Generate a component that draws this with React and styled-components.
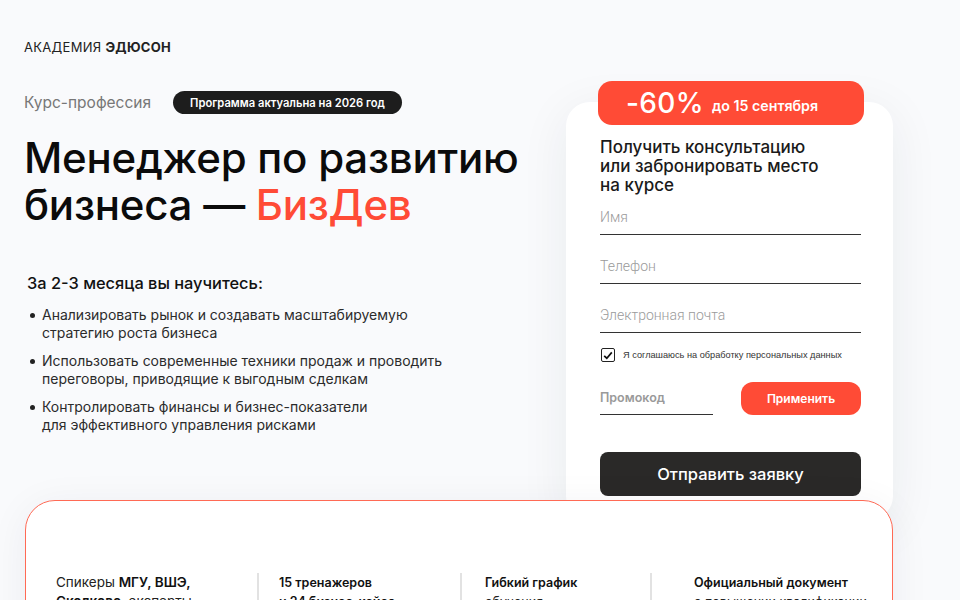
import React from 'react';
import styled, { createGlobalStyle } from 'styled-components';

const GlobalStyle = createGlobalStyle`
  html, body {
    margin: 0;
    padding: 0;
    background: #f9fafc;
  }
  body {
    font-family: 'Inter', 'Noto Sans', sans-serif;
    color: #111;
    overflow: hidden;
  }
  * {
    box-sizing: border-box;
  }
`;

const Page = styled.div`
  width: 960px;
  height: 600px;
  padding: 40px 67px 0 24px;
  overflow: hidden;
`;

const Logo = styled.div`
  font-size: 13px;
  line-height: 14px;
  letter-spacing: 0.3px;
  color: #222;

  b {
    font-weight: 700;
  }
`;

const Hero = styled.div`
  display: flex;
  align-items: flex-start;
  justify-content: space-between;
  margin-top: 27px;
`;

const Left = styled.div`
  padding-top: 10px;
`;

const TagRow = styled.div`
  display: flex;
  align-items: center;
  gap: 22px;
`;

const Kind = styled.span`
  font-size: 15.5px;
  color: #777;
`;

const Badge = styled.span`
  display: inline-flex;
  align-items: center;
  height: 23px;
  padding: 0 17px;
  border-radius: 12px;
  background: #1d1d1d;
  color: #fff;
  font-size: 11.2px;
  font-weight: 600;
`;

const Title = styled.h1`
  margin: 20px 0 0;
  font-size: 42px;
  line-height: 47px;
  font-weight: 500;
  letter-spacing: -0.25px;
  color: #0b0b0b;

  span {
    color: #ff4b36;
  }
`;

const Subtitle = styled.h3`
  margin: 44px 0 0 3px;
  font-size: 16.4px;
  line-height: 22px;
  font-weight: 500;
  color: #111;
`;

const List = styled.ul`
  margin: 12px 0 0;
  padding: 0 0 0 18px;
  list-style: none;
  display: flex;
  flex-direction: column;
  gap: 10px;
`;

const Item = styled.li`
  position: relative;
  font-size: 14px;
  line-height: 18px;
  color: #2b2b2b;

  &::before {
    content: '';
    position: absolute;
    left: -12px;
    top: 7px;
    width: 5px;
    height: 5px;
    border-radius: 50%;
    background: #222;
  }
`;

const FormColumn = styled.div`
  width: 327px;
  display: flex;
  flex-direction: column;
  align-items: center;
`;

const Discount = styled.div`
  position: relative;
  z-index: 1;
  width: 266px;
  height: 44px;
  margin-bottom: -23px;
  margin-left: 3px;
  border-radius: 14px;
  background: #ff4b36;
  color: #fff;
  display: flex;
  align-items: center;
  justify-content: center;
  gap: 8px;
  padding-right: 18px;
`;

const Percent = styled.span`
  font-size: 28px;
  font-weight: 500;
  letter-spacing: 0.4px;
`;

const Until = styled.span`
  font-size: 14.2px;
  font-weight: 600;
  padding-top: 5px;
`;

const Card = styled.div`
  width: 100%;
  background: #fff;
  border-radius: 24px;
  padding: 36px 32px 24px 34px;
  box-shadow: 0 10px 50px rgba(30, 40, 60, 0.07);
`;

const CardTitle = styled.div`
  font-size: 17px;
  line-height: 19px;
  font-weight: 500;
  color: #1a1a1a;
`;

const Fields = styled.div`
  margin-top: 7px;
  display: flex;
  flex-direction: column;
  gap: 16px;
`;

const Field = styled.input`
  display: block;
  width: ${(p) => p.$width || '100%'};
  height: 33px;
  padding: 0 0 2px;
  border: none;
  border-bottom: 1px solid #333;
  background: transparent;
  font-family: 'Roboto', 'Inter', sans-serif;
  font-size: 14px;
  outline: none;

  &::placeholder {
    color: #9a9a9a;
    font-weight: ${(p) => (p.$strong ? 600 : 300)};
    font-family: ${(p) => (p.$strong ? "'Inter', sans-serif" : "'Roboto', sans-serif")};
    font-size: ${(p) => (p.$strong ? '12.5px' : '14px')};
  }
`;

const Agree = styled.label`
  display: flex;
  align-items: center;
  gap: 8px;
  margin-top: 15px;
  margin-left: 1px;
  font-family: 'Liberation Sans', Arial, sans-serif;
  font-size: 9.2px;
  color: #333;
`;

const Box = styled.span`
  width: 14px;
  height: 14px;
  border: 1.5px solid #222;
  border-radius: 2px;
  display: flex;
  align-items: center;
  justify-content: center;
`;

const PromoRow = styled.div`
  margin-top: 20px;
  display: flex;
  align-items: flex-end;
  justify-content: space-between;
`;

const ApplyButton = styled.button`
  width: 120px;
  height: 33px;
  border: none;
  border-radius: 12px;
  background: #ff4b36;
  color: #fff;
  font-family: 'Inter', sans-serif;
  font-size: 12px;
  font-weight: 600;
  align-self: flex-start;
`;

const Submit = styled.button`
  display: block;
  width: 100%;
  height: 44px;
  margin-top: 37px;
  border: none;
  border-radius: 8px;
  background: #2a2928;
  color: #fff;
  font-family: 'Inter', sans-serif;
  font-size: 16.5px;
  font-weight: 500;
`;

const Features = styled.div`
  position: relative;
  z-index: 2;
  margin: -20px 0 0 1px;
  height: 160px;
  background: #fff;
  border: 1px solid #ff6a55;
  border-radius: 30px;
  padding: 72px 0 0 30px;
  box-shadow: 0 6px 40px rgba(30, 40, 60, 0.06);
  display: grid;
  grid-template-columns: 201px 203px 190px 1fr;
  align-items: start;
`;

const Feature = styled.div`
  font-size: ${(p) => (p.$pad ? 12.5 : 13.5)}px;
  line-height: 19px;
  color: #222;
  padding-left: ${(p) => p.$pad || 0}px;
  border-left: ${(p) => (p.$pad ? '2px solid #e2e2e2' : 'none')};

  b {
    font-weight: 600;
    color: #111;
  }
`;

const Check = () => (
  <svg width="10" height="9" viewBox="0 0 10 9" fill="none">
    <path d="M1.2 4.8 L3.8 7.2 L8.8 1.4" stroke="#111" strokeWidth="1.7" />
  </svg>
);

export default function App() {
  return (
    <Page>
      <GlobalStyle />
      <Logo>
        АКАДЕМИЯ <b>ЭДЮСОН</b>
      </Logo>
      <Hero>
        <Left>
          <TagRow>
            <Kind>Курс-профессия</Kind>
            <Badge>Программа актуальна на 2026 год</Badge>
          </TagRow>
          <Title>
            Менеджер по развитию
            <br />
            бизнеса — <span>БизДев</span>
          </Title>
          <Subtitle>За 2-3 месяца вы научитесь:</Subtitle>
          <List>
            <Item>
              Анализировать рынок и создавать масштабируемую
              <br />
              стратегию роста бизнеса
            </Item>
            <Item>
              Использовать современные техники продаж и проводить
              <br />
              переговоры, приводящие к выгодным сделкам
            </Item>
            <Item>
              Контролировать финансы и бизнес-показатели
              <br />
              для эффективного управления рисками
            </Item>
          </List>
        </Left>
        <FormColumn>
          <Discount>
            <Percent>-60%</Percent>
            <Until>до 15 сентября</Until>
          </Discount>
          <Card>
            <CardTitle>
              Получить консультацию
              <br />
              или забронировать место
              <br />
              на курсе
            </CardTitle>
            <Fields>
              <Field placeholder="Имя" />
              <Field placeholder="Телефон" />
              <Field placeholder="Электронная почта" />
            </Fields>
            <Agree>
              <Box>
                <Check />
              </Box>
              Я соглашаюсь на обработку персональных данных
            </Agree>
            <PromoRow>
              <Field placeholder="Промокод" $width="113px" $strong />
              <ApplyButton>Применить</ApplyButton>
            </PromoRow>
            <Submit>Отправить заявку</Submit>
          </Card>
        </FormColumn>
      </Hero>
      <Features>
        <Feature>
          Спикеры <b>МГУ, ВШЭ,</b>
          <br />
          <b>Сколково</b>, эксперты
        </Feature>
        <Feature $pad={20}>
          <b>15 тренажеров</b>
          <br />
          <b>и 24 бизнес-кейса</b>
        </Feature>
        <Feature $pad={23}>
          <b>Гибкий график</b>
          <br />
          обучения
        </Feature>
        <Feature $pad={42}>
          <b>Официальный документ</b>
          <br />
          о повышении квалификации
        </Feature>
      </Features>
    </Page>
  );
}
